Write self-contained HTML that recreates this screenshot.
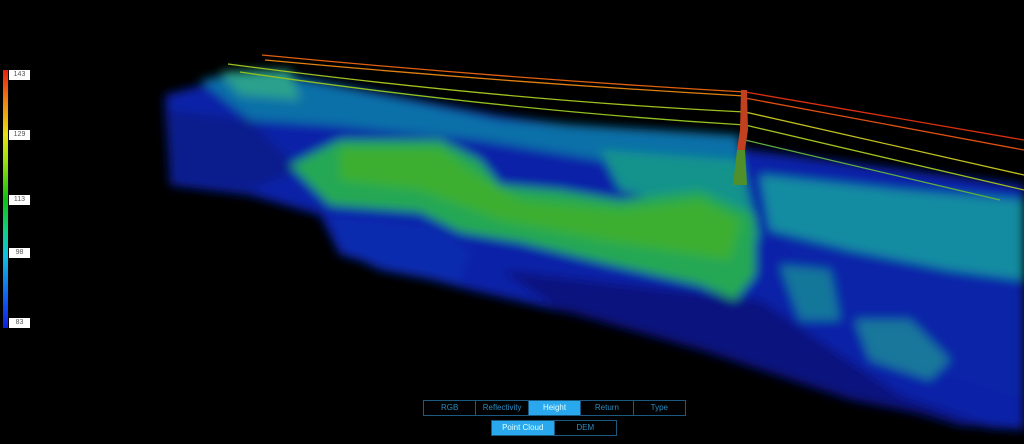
<!DOCTYPE html>
<html><head><meta charset="utf-8"><style>
html,body{margin:0;padding:0;background:#000;width:1024px;height:444px;overflow:hidden;font-family:"Liberation Sans",sans-serif}
.bar{position:absolute;left:3px;top:70px;width:5px;height:258px;background:linear-gradient(#e8200c,#f08010 12%,#e8e010 25%,#a0e010 35%,#10c010 50%,#10d080 62%,#10c0e0 72%,#1060f0 88%,#1020e0)}
.lb{position:absolute;left:9px;width:21px;height:10px;background:#fff;color:#555;font-size:7px;line-height:10px;text-align:center}
.seg{position:absolute;display:flex;border:1px solid #1a5a80;box-sizing:border-box}
.seg div{flex:1;color:#2a8ac0;font-size:8px;line-height:14px;text-align:center;border-left:1px solid #1a5a80}
.seg div:first-child{border-left:none}
.seg .on{background:#29a8ee;color:#dff}
</style></head><body>
<svg width="1024" height="444" style="position:absolute;left:0;top:0">
<defs>
<filter id="b" x="-10%" y="-10%" width="120%" height="120%"><feGaussianBlur stdDeviation="5"/></filter>
</defs>
<g filter="url(#b)" opacity="0.88">
<polygon fill="#0a28c0" points="165,95 260,70 500,115 750,150 1024,185 1024,430 960,425 850,395 720,350 600,320 470,290 340,255 320,215 250,195 170,185"/>
<polygon fill="#0a20a0" points="165,110 250,120 300,170 250,190 170,180"/>
<polygon fill="#0c30c8" points="330,215 430,225 470,250 460,285 380,270 340,250"/>
<polygon fill="#081890" points="500,270 760,300 900,395 1000,430 850,400 700,350 560,310"/>
<polygon fill="#0a2cc0" points="780,240 1024,290 1024,400 900,360"/>
<polygon fill="#1080c0" points="200,80 260,70 500,120 740,135 740,175 600,160 480,140 330,125 250,120"/>
<polygon fill="#18a0b8" points="760,175 900,190 1024,200 1024,280 950,270 850,250 770,230"/>
<polygon fill="#14a8a0" points="600,150 740,160 760,240 700,210 620,190"/>
<polygon fill="#2cc060" points="290,165 340,140 440,140 480,160 500,185 560,190 620,200 700,190 755,215 755,275 735,300 700,285 600,262 520,242 460,232 420,212 330,205"/>
<polygon fill="#44c838" points="340,148 440,148 470,170 520,200 620,210 700,200 740,220 730,260 600,240 500,220 420,190 340,180"/>
<polygon fill="#1888b0" points="780,265 830,270 840,320 800,320"/>
<polygon fill="#1a88b0" points="855,320 910,320 950,360 930,380 870,360"/>
<polygon fill="#30b8a0" points="220,72 290,70 300,100 240,95"/>
</g>
<g fill="none" stroke-width="1.3">
<path d="M262 55 Q500 78 745 92" stroke="#e06010"/>
<path d="M265 60 Q500 82 745 96" stroke="#e08010"/>
<path d="M745 92 L1024 140" stroke="#d83010"/>
<path d="M745 98 L1024 150" stroke="#e05010"/>
<path d="M228 64 Q500 100 745 112" stroke="#a0c020"/>
<path d="M240 72 Q500 110 745 125" stroke="#90c020"/>
<path d="M745 112 L1024 175" stroke="#c0c020"/>
<path d="M745 125 L1024 190" stroke="#a0c020"/>
<path d="M745 140 L1000 200" stroke="#60b040"/>
</g>
<polygon fill="#c04020" points="741,90 747,90 748,130 745,150 737,150 740,130"/>
<polygon fill="#50902a" points="737,150 745,150 747,185 733,185"/>
</svg>
<div class="bar"></div>
<div class="lb" style="top:70px">143</div>
<div class="lb" style="top:130px">129</div>
<div class="lb" style="top:195px">113</div>
<div class="lb" style="top:248px">98</div>
<div class="lb" style="top:318px">83</div>
<div class="seg" style="left:423px;top:400px;width:263px;height:16px"><div>RGB</div><div>Reflectivity</div><div class="on">Height</div><div>Return</div><div>Type</div></div>
<div class="seg" style="left:491px;top:420px;width:126px;height:16px"><div class="on">Point Cloud</div><div>DEM</div></div>
</body></html>
